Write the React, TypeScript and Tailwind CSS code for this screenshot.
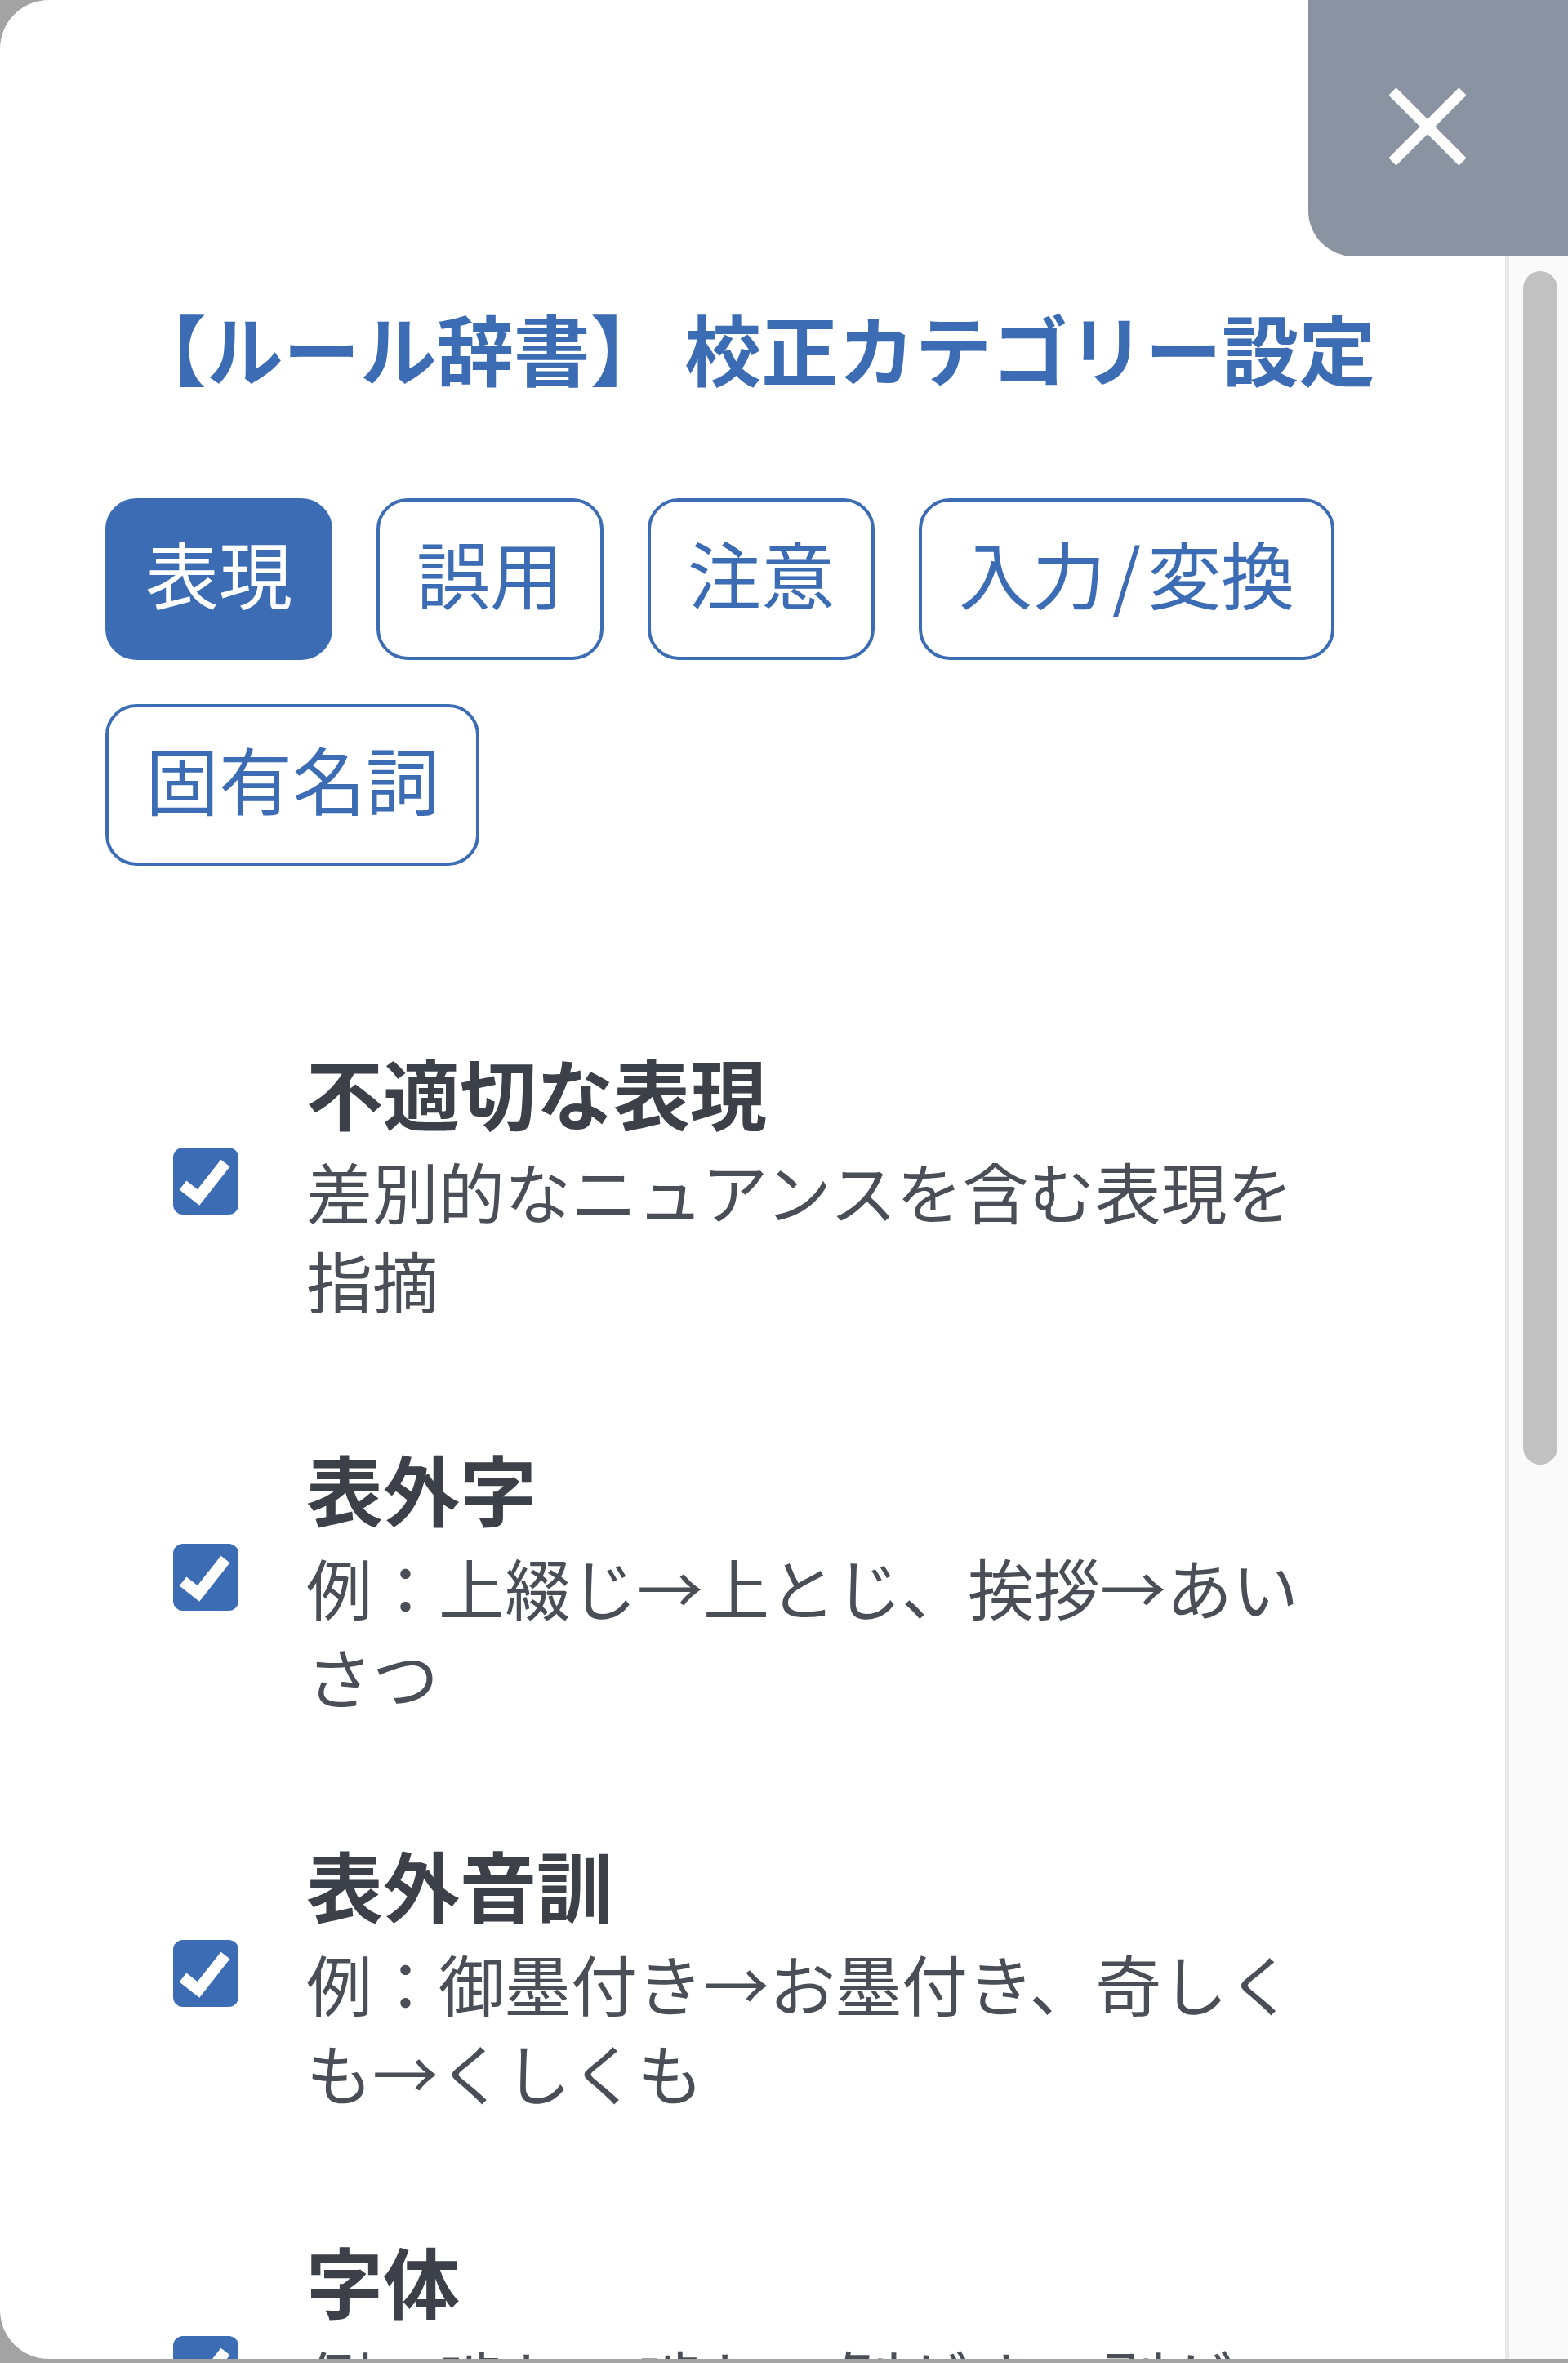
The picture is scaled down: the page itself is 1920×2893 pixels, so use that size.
import { useState } from "react";

const categories = ["表現", "誤用", "注意", "入力/変換", "固有名詞"];

const rules = [
  { title: "不適切な表現", desc: "差別的なニュアンスを含む表現を指摘" },
  { title: "表外字", desc: "例：上綴じ→上とじ、挨拶→あいさつ" },
  { title: "表外音訓", desc: "例：御墨付き→お墨付き、奇しくも→くしくも" },
  { title: "字体", desc: "例：嚙む→噛む、剝がす→剥がす、頰→頬" },
];

function CheckBox() {
  return (
    <div className="w-[80px] h-[82px] shrink-0 rounded-[12px] bg-[#3c6db4] flex items-center justify-center">
      <svg width="80" height="82" viewBox="0 0 80 82">
        <path d="M12 46 L31 61 L64 19" fill="none" stroke="#fff" strokeWidth="14" strokeLinejoin="miter" />
      </svg>
    </div>
  );
}

function Label({ text }: { text: string }) {
  // the slash sits a little wider in the reference font
  const i = text.indexOf("/");
  if (i < 0) return <>{text}</>;
  return (
    <>
      {text.slice(0, i)}
      <span className="mx-[8px]">/</span>
      {text.slice(i + 1)}
    </>
  );
}

export default function App() {
  const [active, setActive] = useState("表現");

  return (
    <div className="w-[1920px] h-[2893px] bg-[#a3a3a3] overflow-hidden font-['Noto_Sans_CJK_JP','Noto_Sans',sans-serif]">
      <div className="relative h-[2888px] bg-white rounded-l-[60px] overflow-hidden flex">
        {/* content */}
        <div className="flex-1 pt-[365px]">
          <h1 className="text-center text-[94px] leading-[120px] font-bold text-[#3c6db4]">
            【ルール辞書】 校正カテゴリー設定
          </h1>

          <div className="mt-[125px] pl-[129px] pr-[150px] flex flex-wrap gap-x-[54px] gap-y-[54px]">
            {categories.map((c) => (
              <button
                key={c}
                onClick={() => setActive(c)}
                className={
                  "h-[198px] px-[45px] pt-[21px] pb-[39px] text-[90px] leading-[130px] rounded-[38px] border-4 border-[#3c6db4] " +
                  (active === c ? "bg-[#3c6db4] text-white" : "bg-white text-[#3c6db4]")
                }
              >
                <Label text={c} />
              </button>
            ))}
          </div>

          <div className="mt-[211px] pl-[212px] flex flex-col gap-[136px]">
            {rules.map((r) => (
              <label key={r.title} className="flex items-center gap-[83px]">
                <CheckBox />
                <div className="w-[1260px]">
                  <div className="text-[94px] leading-[131px] font-bold text-[#3c4048]">{r.title}</div>
                  <div className="text-[81px] leading-[109px] text-[#4a4e56]">{r.desc}</div>
                </div>
              </label>
            ))}
          </div>
        </div>

        {/* scrollbar */}
        <div className="w-[77px] shrink-0 border-l-[5px] border-[#e8e8e8] bg-[#fafafa] pt-[332px] pl-[17px] pr-[13px]">
          <div className="h-[1461px] rounded-full bg-[#c1c1c1]" />
        </div>

        {/* close button */}
        <button className="absolute top-0 right-0 w-[318px] h-[314px] pr-[26px] pb-[5px] bg-[#8a93a1] rounded-bl-[56px] flex items-center justify-center">
          <svg width="94" height="94" viewBox="0 0 94 94">
            <path d="M4 4 L90 90 M90 4 L4 90" stroke="#fff" strokeWidth="13" />
          </svg>
        </button>
      </div>
    </div>
  );
}
